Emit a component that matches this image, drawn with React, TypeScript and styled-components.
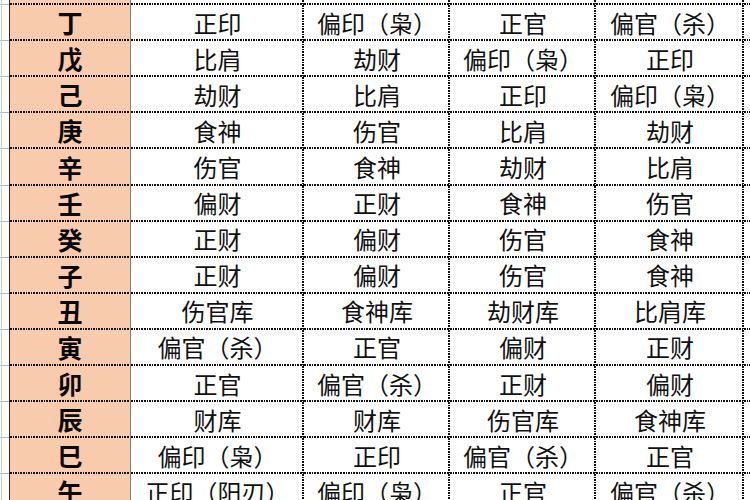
import { memo } from "react";
import styled, { createGlobalStyle, css } from "styled-components";

const GlobalStyle = createGlobalStyle`
    html, body{
        margin:0;
        padding:0;
        background:#fff;
        overflow:hidden;
    }
    #root{
        width:750px;
        height:500px;
        overflow:hidden;
    }
`

type Line = 'dot' | 'solid' | 'none'

// first row only shows its bottom border at the top edge
const rows: [string, string[]][] = [
    ['', ['', '', '', '']],
    ['丁', ['正印', '偏印（枭）', '正官', '偏官（杀）']],
    ['戊', ['比肩', '劫财', '偏印（枭）', '正印']],
    ['己', ['劫财', '比肩', '正印', '偏印（枭）']],
    ['庚', ['食神', '伤官', '比肩', '劫财']],
    ['辛', ['伤官', '食神', '劫财', '比肩']],
    ['壬', ['偏财', '正财', '食神', '伤官']],
    ['癸', ['正财', '偏财', '伤官', '食神']],
    ['子', ['正财', '偏财', '伤官', '食神']],
    ['丑', ['伤官库', '食神库', '劫财库', '比肩库']],
    ['寅', ['偏官（杀）', '正官', '偏财', '正财']],
    ['卯', ['正官', '偏官（杀）', '正财', '偏财']],
    ['辰', ['财库', '财库', '伤官库', '食神库']],
    ['巳', ['偏印（枭）', '正印', '偏官（杀）', '正官']],
    ['午', ['正印（阳刃）', '偏印（枭）', '正官', '偏官（杀）']],
]

const colWidths = [173, 146, 146, 148]

const App = memo(()=>{
    return (
        <>
            <GlobalStyle/>
            <Sheet>
                {rows.map(([stem, cells], r)=>(
                    <Row key={r}>
                        <Gutter/>
                        <Cell $w={121} $right='solid' $head>{stem}</Cell>
                        {cells.map((text, i)=>(
                            <Cell key={i} $w={colWidths[i]} $right='dot'>{text}</Cell>
                        ))}
                        <Cell $w={6} $right='none'/>
                    </Row>
                ))}
            </Sheet>
        </>
    )
})
export default App

const DOT_H = 'repeating-linear-gradient(90deg, #0e0e0e 0 1.6px, transparent 1.6px 2.6px)'
const DOT_V = 'repeating-linear-gradient(180deg, #0e0e0e 0 1.6px, transparent 1.6px 2.6px)'

const Sheet = styled.div`
    display:flex;
    flex-direction:column;
    width:750px;
    margin-top:-31px;
    font-family:"Noto Sans CJK SC", "Noto Sans", sans-serif;
    color:#111;
`

const Row = styled.div`
    display:flex;
    height:36.1px;
    flex-shrink:0;
`

const Gutter = styled.div`
    width:10px;
    flex-shrink:0;
    box-sizing:border-box;
    border-right:1px solid #2a2a2a;
    background:
        linear-gradient(#c9ccd2, #c9ccd2) 1px 0 / 1px 100% no-repeat,
        linear-gradient(#b8b8b8, #b8b8b8) 0 100% / 100% 1px no-repeat,
        #fff;
`

const Cell = styled.div<{$w:number, $right:Line, $head?:boolean}>`
    width:${(p)=>p.$w}px;
    flex-shrink:0;
    box-sizing:border-box;
    display:flex;
    align-items:center;
    justify-content:center;
    white-space:nowrap;
    font-size:24px;
    line-height:1;
    padding-bottom:1px;
    ${(p)=>{
        switch(p.$right){
            case 'dot': return css`
                background:
                    ${DOT_H} 0 100% / 100% 2px no-repeat,
                    ${DOT_V} 100% 0 / 2px 100% no-repeat,
                    #fff;
            `
            case 'solid': return css`
                border-right:1px solid #8a8078;
                background:
                    ${DOT_H} 0 100% / 100% 2px no-repeat,
                    #f7cbac;
            `
            default: return css`
                background:
                    ${DOT_H} 0 100% / 100% 2px no-repeat,
                    #fff;
            `
        }
    }}
    ${(p)=>p.$head && css`
        font-weight:700;
        font-size:25px;
        color:#0a0a0a;
    `}
`
